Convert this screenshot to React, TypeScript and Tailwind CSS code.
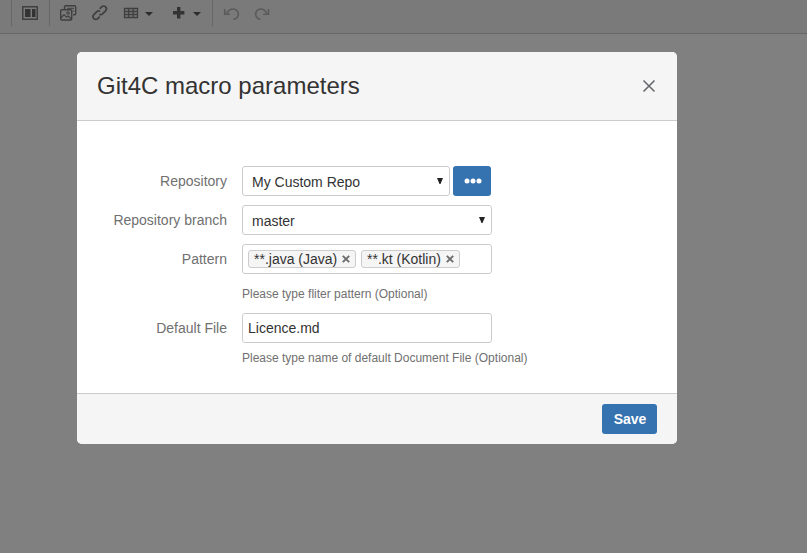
import type { ReactNode } from "react";

function Toolbar() {
  return (
    <header className="h-[34px] border-b border-[#666666] bg-[#7a7a7a]">
      <svg width="290" height="33" viewBox="0 0 290 33" fill="none" stroke="#3f3f3f" aria-hidden="true">
        <path d="M11.5 0v26M49.5 0v26M212.5 0v26" stroke="#676767" />
        <rect x="22.75" y="6.75" width="14.5" height="12.5" strokeWidth="1.5" />
        <path d="M25 9h5.5v8H25zM32 9h3.500v8H32z" fill="#333333" stroke="none" />
        <g strokeWidth="1.4" strokeLinejoin="round">
          <path d="M64.500 9V7a1.200 1.200 0 0 1 1.200-1.200h8.800A1.200 1.200 0 0 1 75.700 7v6.500a1.200 1.200 0 0 1-1.200 1.200H73" />
          <path d="M67 8.300h7M72.500 11h1.800" strokeWidth="1" />
          <rect x="60.700" y="9.700" width="11" height="10.300" rx="1" />
          <circle cx="68" cy="13" r="1.200" strokeWidth="1.100" />
          <path d="M61 18l3-3.300 2.500 2.500 1.800-1.200 3 3" strokeWidth="1.200" />
        </g>
        <g transform="translate(99.700 12.700) rotate(-45)" strokeWidth="1.700">
          <path d="M-1.300.8A2.800 2.800 0 0 0 1.200 2.800h4.300a2.800 2.800 0 0 0 0-5.600H2.800" />
          <path d="M1.300-.8A2.800 2.800 0 0 0-1.200-2.800h-4.300a2.800 2.800 0 0 0 0 5.600h2.700" />
        </g>
        <path d="M124.500 8.500h13v9h-13zM124.500 11.500h13M124.500 14.500h13M128.700 8.500v9M133.200 8.500v9" strokeWidth="1.300" />
        <path d="M145 12h8l-4 4zM193 12h8l-4 4z" fill="#2d2d2d" stroke="none" />
        <path d="M178.700 7v11.400M173 12.700h11.400" stroke="#333333" strokeWidth="3.400" />
        <g stroke="#5a5a5a" strokeWidth="1.600">
          <path d="M226.500 13.500C228.300 10.500 230.500 9 233 9a5.100 5.100 0 0 1 .5 10.200" />
          <path d="M224.700 9v5.300h5.300" />
          <path d="M267 13.500C265.200 10.500 263.500 9 261 9a5.100 5.100 0 0 0-.5 10.200" />
          <path d="M268.500 9v5.300h-5.300" />
        </g>
      </svg>
    </header>
  );
}

function Field({ label, children }: { label: string; children: ReactNode }) {
  return (
    <div className="flex">
      <label className="w-[150px] pr-[15px] text-right leading-[30px] whitespace-nowrap text-[#707070]">{label}</label>
      <div>{children}</div>
    </div>
  );
}

function SelectBox({ value, width }: { value: string; width: string }) {
  return (
    <div className={`flex h-[30px] items-center justify-between rounded-[3px] border border-[#cccccc] bg-white pr-[6px] pl-[9px] ${width}`}>
      <span className="pt-[2px] leading-5">{value}</span>
      <svg width="6" height="6" viewBox="0 0 6 6" aria-hidden="true">
        <path d="M0 0h6L3.500 6h-1z" fill="#222222" />
      </svg>
    </div>
  );
}

function Tag({ text, width }: { text: string; width: string }) {
  return (
    <span className={`flex h-[18px] items-center justify-between rounded-[3px] border border-[#cccccc] bg-[#f5f5f5] pr-[5px] pl-[5px] leading-4 whitespace-nowrap ${width}`}>
      {text}
      <svg width="8" height="8" viewBox="0 0 8 8" aria-hidden="true">
        <path d="M.8.8l6.400 6.400M7.200.8L.8 7.200" stroke="#6b6b6b" strokeWidth="1.900" />
      </svg>
    </span>
  );
}

export default function App() {
  return (
    <div className="h-[553px] w-[807px] overflow-hidden bg-[#808080] font-['Liberation_Sans',Arial,sans-serif] text-[14px] text-[#333333]">
      <Toolbar />
      <section role="dialog" className="mt-[18px] ml-[77px] h-[392px] w-[600px] overflow-hidden rounded-[5px] bg-white">
        <div className="flex h-[69px] items-center justify-between border-b border-[#cccccc] bg-[#f5f5f5] pr-[21px] pl-5">
          <h1 className="text-[24px] leading-7">Git4C macro parameters</h1>
          <svg width="14" height="14" viewBox="0 0 14 14" aria-hidden="true">
            <path d="M1.500 1.500l11 11M12.500 1.500l-11 11" stroke="#66696d" strokeWidth="1.600" />
          </svg>
        </div>
        <div className="flex h-[272px] flex-col gap-[9px] pt-[45px] pl-[15px]">
          <Field label="Repository">
            <div className="flex gap-[3px]">
              <SelectBox value="My Custom Repo" width="w-[208px]" />
              <button className="flex h-[30px] w-[38px] items-center justify-center rounded-[3px] bg-[#3572b0] pl-[2px]">
                <svg width="18" height="6" viewBox="0 0 18 6" fill="#ffffff" aria-hidden="true">
                  <circle cx="3" cy="3" r="2.500" />
                  <circle cx="9" cy="3" r="2.500" />
                  <circle cx="15" cy="3" r="2.500" />
                </svg>
              </button>
            </div>
          </Field>
          <Field label="Repository branch">
            <SelectBox value="master" width="w-[250px]" />
          </Field>
          <Field label="Pattern">
            <div className="flex h-[30px] w-[250px] items-center gap-[5px] rounded-[3px] border border-[#cccccc] pl-[5px]">
              <Tag text="**.java (Java)" width="w-[108px]" />
              <Tag text="**.kt (Kotlin)" width="w-[99px]" />
            </div>
            <p className="mt-[11px] mb-px text-[12px] leading-[18px] text-[#707070]">Please type fliter pattern (Optional)</p>
          </Field>
          <Field label="Default File">
            <div className="flex h-[30px] w-[250px] items-center rounded-[3px] border border-[#cccccc] pl-[5px]">Licence.md</div>
            <p className="mt-[6px] text-[12px] leading-[18px] whitespace-nowrap text-[#707070]">
              Please type name of default Document File (Optional)
            </p>
          </Field>
        </div>
        <div className="flex h-[51px] justify-end border-t border-[#cccccc] bg-[#f5f5f5] pt-[10px] pr-5">
          <button className="h-[30px] w-[55px] rounded-[3px] bg-[#3572b0] pl-px text-[14px] font-bold tracking-[-0.1px] text-white">Save</button>
        </div>
      </section>
    </div>
  );
}
